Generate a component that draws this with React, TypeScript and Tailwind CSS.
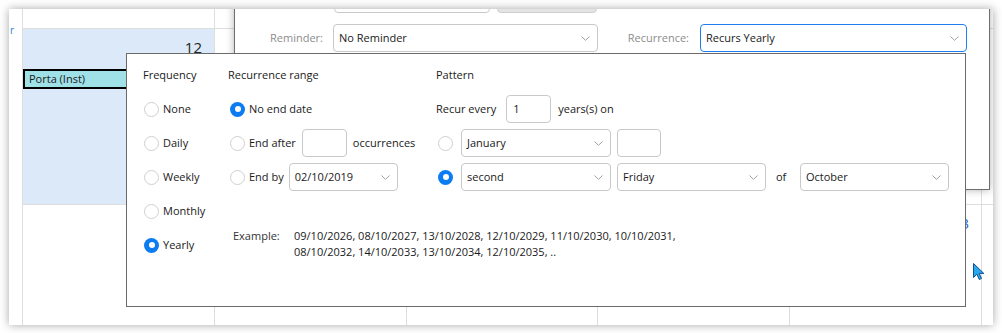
import React from "react";

function Chevron() {
  return (
    <svg width="9" height="5" viewBox="0 0 9 5" className="shrink-0">
      <path d="M0.5 0.5 L4.5 4.3 L8.5 0.5" fill="none" stroke="#a0a0a0" strokeWidth="1" />
    </svg>
  );
}

function Radio({ checked }: { checked?: boolean }) {
  if (checked) {
    return (
      <span className="flex h-[15px] w-[15px] shrink-0 items-center justify-center rounded-full bg-[#0c7cf2]">
        <span className="h-[6px] w-[6px] rounded-full bg-white" />
      </span>
    );
  }
  return <span className="h-[15px] w-[15px] shrink-0 rounded-full border border-[#d0d0d0] bg-white" />;
}

function Select({ text, className, blue }: { text: string; className: string; blue?: boolean }) {
  return (
    <div
      className={`flex h-[28px] shrink-0 items-center justify-between rounded-[4px] border pl-[5px] pr-[7px] ${
        blue ? "border-[#1f7ef0]" : "border-[#c9c9c9]"
      } ${className}`}
    >
      <span>{text}</span>
      <Chevron />
    </div>
  );
}

function Box({ className }: { className: string }) {
  return <div className={`h-[28px] shrink-0 rounded-[4px] border border-[#c9c9c9] ${className}`} />;
}

const frequencies = [
  { label: "None" },
  { label: "Daily" },
  { label: "Weekly" },
  { label: "Monthly" },
  { label: "Yearly", checked: true },
];

export default function App() {
  return (
    <div className="h-[333px] w-[1002px] bg-white p-[9px] font-['Open_Sans',sans-serif] text-[11px] text-[#1a1a1a]">
      <div className="relative h-[316px] w-[984px] overflow-hidden bg-white shadow-[0_0_9px_rgba(0,0,0,0.35)]">
        {/* Calendar grid behind */}
        <div className="grid h-full grid-cols-[14px_192px_192px_191px_192px_192px_11px] grid-rows-[20px_176px_120px]">
          <div className="row-span-3 border-r border-[#dedede] pt-[16px] pl-[1px] text-[10px] leading-[10px] text-[#2a7fd4]">
            r
          </div>
          {[0, 1, 2, 3, 4].map((i) => (
            <div key={"h" + i} className="border-r border-b border-[#dedede]" />
          ))}
          <div className="border-b border-[#dedede]" />

          <div className="flex flex-col border-r border-b border-[#dedede] bg-[#dce9f9] pt-[8px]">
            <div className="h-[20px] pr-[12px] text-right text-[15px] leading-[20px] text-[#222]">12</div>
            <div className="mt-[12px] h-[20px] border-2 border-black bg-[#a0e0e7] pl-[4px] leading-[16px]">
              Porta (Inst)
            </div>
          </div>
          {[0, 1, 2, 3].map((i) => (
            <div key={"a" + i} className="border-r border-b border-[#dedede]" />
          ))}
          <div className="border-b border-[#dedede]" />

          {[0, 1, 2].map((i) => (
            <div key={"b" + i} className="border-r border-[#dedede]" />
          ))}
          <div className="border-r border-[#dedede]" />
          <div className="border-r border-[#dedede] pt-[8px] pr-[12px] text-right text-[15px] leading-[20px] text-[#1f6fd1]">
            23
          </div>
          <div />
        </div>

        {/* Appointment dialog */}
        <div className="absolute left-[225px] top-[-40px] h-[221px] w-[756px] border border-[#6e6e6e] bg-white pt-[15px] shadow-[0_0_8px_rgba(0,0,0,0.3)]">
          <div className="flex items-center">
            <div className="w-[88px]" />
            <Box className="ml-[11px] w-[156px]" />
            <div className="ml-[7px] h-[28px] w-[100px] rounded-[4px] border border-[#cfcfcf] bg-[#e4e4e4]" />
          </div>
          <div className="mt-[11px] flex items-center">
            <div className="w-[88px] text-right text-[#8c8c8c]">Reminder:</div>
            <Select text="No Reminder" className="ml-[10px] w-[265px]" />
            <div className="w-[91px] text-right text-[#8c8c8c]">Recurrence:</div>
            <Select text="Recurs Yearly" className="ml-[11px] w-[267px]" blue />
          </div>
        </div>

        {/* Recurrence popup */}
        <div className="absolute left-[117px] top-[44px] flex h-[254px] w-[840px] border border-[#6b6b6b] bg-white pl-[16px]">
          <div className="flex w-[85px] flex-col">
            <div className="h-[38px] pt-[13px] leading-[16px]">Frequency</div>
            {frequencies.map((f) => (
              <div key={f.label} className="flex h-[34px] items-center gap-[4px] pl-[1px]">
                <Radio checked={f.checked} />
                <span>{f.label}</span>
              </div>
            ))}
          </div>

          <div className="flex flex-col">
            <div className="flex">
              <div className="flex w-[208px] flex-col">
                <div className="h-[38px] pt-[13px] leading-[16px]">Recurrence range</div>
                <div className="flex h-[34px] items-center gap-[4px] pl-[2px]">
                  <Radio checked />
                  <span>No end date</span>
                </div>
                <div className="flex h-[34px] items-center pl-[2px]">
                  <Radio />
                  <span className="ml-[4px]">End after</span>
                  <Box className="ml-[6px] w-[45px]" />
                  <span className="ml-[6px]">occurrences</span>
                </div>
                <div className="flex h-[34px] items-center pl-[2px]">
                  <Radio />
                  <span className="ml-[4px]">End by</span>
                  <Select text="02/10/2019" className="ml-[5px] w-[109px]" />
                </div>
              </div>

              <div className="flex flex-col">
                <div className="h-[38px] pt-[13px] leading-[16px]">Pattern</div>
                <div className="flex h-[34px] items-center">
                  <span>Recur every</span>
                  <div className="ml-[10px] flex h-[28px] w-[45px] items-center rounded-[4px] border border-[#c9c9c9] pl-[6px]">
                    1
                  </div>
                  <span className="ml-[7px]">years(s) on</span>
                </div>
                <div className="flex h-[34px] items-center pl-[2px]">
                  <Radio />
                  <Select text="January" className="ml-[8px] w-[150px]" />
                  <Box className="ml-[6px] w-[44px]" />
                </div>
                <div className="flex h-[34px] items-center pl-[2px]">
                  <Radio checked />
                  <Select text="second" className="ml-[8px] w-[150px]" />
                  <Select text="Friday" className="ml-[6px] w-[149px]" />
                  <span className="ml-[10px] w-[24px]">of</span>
                  <Select text="October" className="w-[149px]" />
                </div>
              </div>
            </div>

            <div className="mt-[34px] flex pl-[5px] leading-[15.5px]">
              <div className="w-[61px] text-[#333]">Example:</div>
              <div className="whitespace-nowrap">
                09/10/2026, 08/10/2027, 13/10/2028, 12/10/2029, 11/10/2030, 10/10/2031,
                <br />
                08/10/2032, 14/10/2033, 13/10/2034, 12/10/2035, ..
              </div>
            </div>
          </div>
        </div>

        {/* Mouse cursor */}
        <svg width="13" height="18" viewBox="0 0 13 18" className="absolute left-[964px] top-[254px]">
          <path
            d="M0.5 0.5 L0.5 14.5 L3.9 11.2 L6.3 16.5 L8.5 15.5 L6.2 10.4 L10.8 10.4 Z"
            fill="#2aa6ee"
            stroke="#0b4f8f"
            strokeWidth="1"
          />
        </svg>
      </div>
    </div>
  );
}
